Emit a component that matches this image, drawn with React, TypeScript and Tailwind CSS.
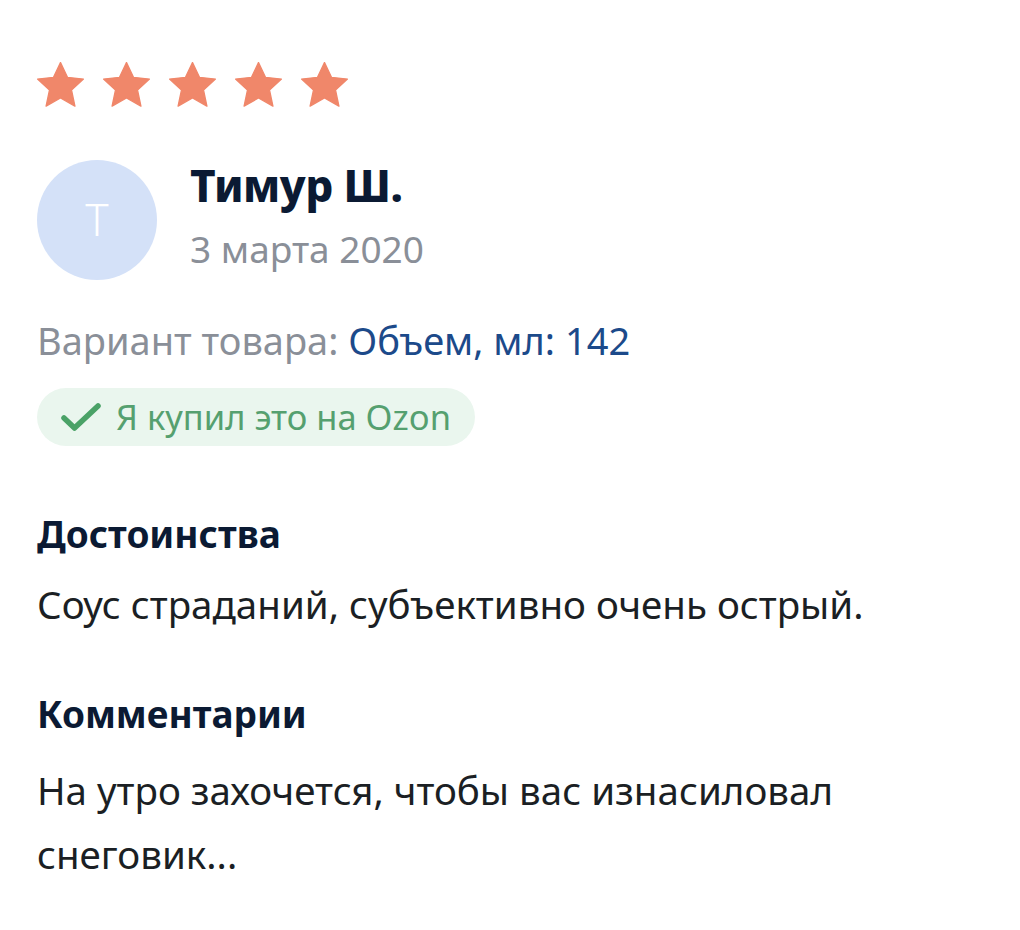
const Star = () => (
    <svg width="47" height="45" viewBox="1.6 1.6 20.8 20">
        <path
            d="M12 1.8l3.1 6.6 7.1.8-5.3 4.9 1.5 7.1L12 17.6l-6.4 3.6 1.5-7.1-5.3-4.9 7.1-.8z"
            fill="#f0876a"
            stroke="#f0876a"
            strokeWidth="0.6"
            strokeLinejoin="round"
        />
    </svg>
)

const CheckMark = () => (
    <svg width="42" height="30" viewBox="0 0 42 30" fill="none">
        <path
            d="M4 16 L14.5 26 L38 4"
            stroke="#4aa267"
            strokeWidth="5.5"
            strokeLinecap="round"
            strokeLinejoin="round"
        />
    </svg>
)

const App = () => {
    return (
        <div
            className="min-h-[930px] w-[1020px] bg-white pl-[37px] pt-[62px]"
            style={{ fontFamily: '"Noto Sans", "Open Sans", sans-serif' }}
        >
            <div className="flex gap-[19px]">
                {[0, 1, 2, 3, 4].map((i) => <Star key={i} />)}
            </div>

            <div className="mt-[53px] flex items-center gap-[33px]">
                <div className="flex h-[120px] w-[120px] items-center justify-center rounded-full bg-[#d4e1f8] pb-[2px] text-[44px] font-light text-white">
                    T
                </div>
                <div className="flex flex-col">
                    <div className="-mt-[10px] text-[44px] font-extrabold leading-[52px] tracking-[-0.5px] text-[#0b1a33]">
                        Тимур Ш.
                    </div>
                    <div className="mt-[16px] text-[37px] leading-[44px] text-[#8a8f98]">
                        3 марта 2020
                    </div>
                </div>
            </div>

            <div className="mt-[36px] text-[38px] leading-[48px] text-[#8a8f98]">
                Вариант товара: <span className="text-[#1c4a8a]">Объем, мл: 142</span>
            </div>

            <div className="mt-[24px] inline-flex h-[58px] items-center gap-[14px] rounded-full bg-[#eaf6ee] pl-[23px] pr-[24px]">
                <CheckMark />
                <span className="text-[34.5px] text-[#55a06f]">Я купил это на Ozon</span>
            </div>

            <div className="mt-[64px] text-[37px] font-bold leading-[48px] text-[#0b1a33]">
                Достоинства
            </div>
            <div className="mt-[20px] text-[38.5px] leading-[52px] text-[#1b1f24]">
                Соус страданий, субъективно очень острый.
            </div>

            <div className="mt-[60px] text-[37px] font-bold leading-[48px] text-[#0b1a33]">
                Комментарии
            </div>
            <div className="mt-[20px] text-[38.5px] leading-[64px] text-[#1b1f24]">
                На утро захочется, чтобы вас изнасиловал
                <br />
                снеговик...
            </div>
        </div>
    )
}

export default App
